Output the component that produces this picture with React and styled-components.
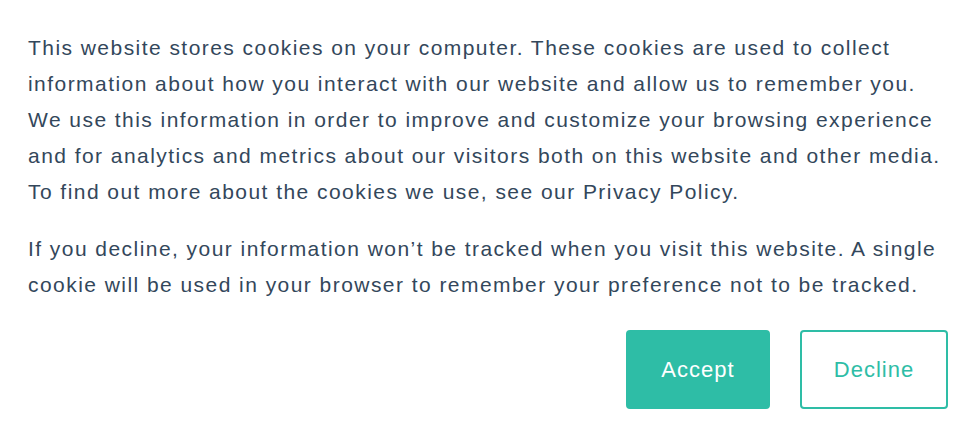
import styled, { createGlobalStyle } from "styled-components";

const GlobalStyle = createGlobalStyle`
    html, body {
        margin: 0;
        padding: 0;
        background: #ffffff;
    }
`;

const BANNER = styled.div`
    box-sizing: border-box;
    width: 980px;
    height: 444px;
    padding: 30px 32px 0 28px;
    font-family: "Liberation Sans", Arial, sans-serif;
    color: #33475b;
    background: #ffffff;
`;

const MESSAGE = styled.p`
    margin: 0 0 21px;
    font-size: 21px;
    line-height: 36px;
    letter-spacing: 1.45px;
`;

const LINE = styled.span`
    display: block;
    white-space: nowrap;
`;

const ACTIONS = styled.div`
    display: flex;
    justify-content: flex-end;
    gap: 30px;
    margin-top: 27px;
`;

const BUTTON = styled.button`
    box-sizing: border-box;
    width: ${(p) => (p.$primary ? "144px" : "148px")};
    height: 79px;
    padding: 0;
    border: 2px solid #2ebda6;
    border-radius: 4px;
    background: ${(p) => (p.$primary ? "#2ebda6" : "#ffffff")};
    color: ${(p) => (p.$primary ? "#ffffff" : "#2ebda6")};
    font-family: "Liberation Sans", Arial, sans-serif;
    font-size: 22px;
    letter-spacing: 1px;
    cursor: pointer;
`;

const FIRST = [
    "This website stores cookies on your computer. These cookies are used to collect",
    "information about how you interact with our website and allow us to remember you.",
    "We use this information in order to improve and customize your browsing experience",
    "and for analytics and metrics about our visitors both on this website and other media.",
    "To find out more about the cookies we use, see our Privacy Policy.",
];

const SECOND = [
    "If you decline, your information won’t be tracked when you visit this website. A single",
    "cookie will be used in your browser to remember your preference not to be tracked.",
];

function App() {
    return (
        <>
            <GlobalStyle />
            <BANNER>
                <MESSAGE>
                    {FIRST.map((t) => <LINE key={t}>{t}</LINE>)}
                </MESSAGE>
                <MESSAGE>
                    {SECOND.map((t) => <LINE key={t}>{t}</LINE>)}
                </MESSAGE>
                <ACTIONS>
                    <BUTTON $primary>Accept</BUTTON>
                    <BUTTON>Decline</BUTTON>
                </ACTIONS>
            </BANNER>
        </>
    );
}

export default App;
